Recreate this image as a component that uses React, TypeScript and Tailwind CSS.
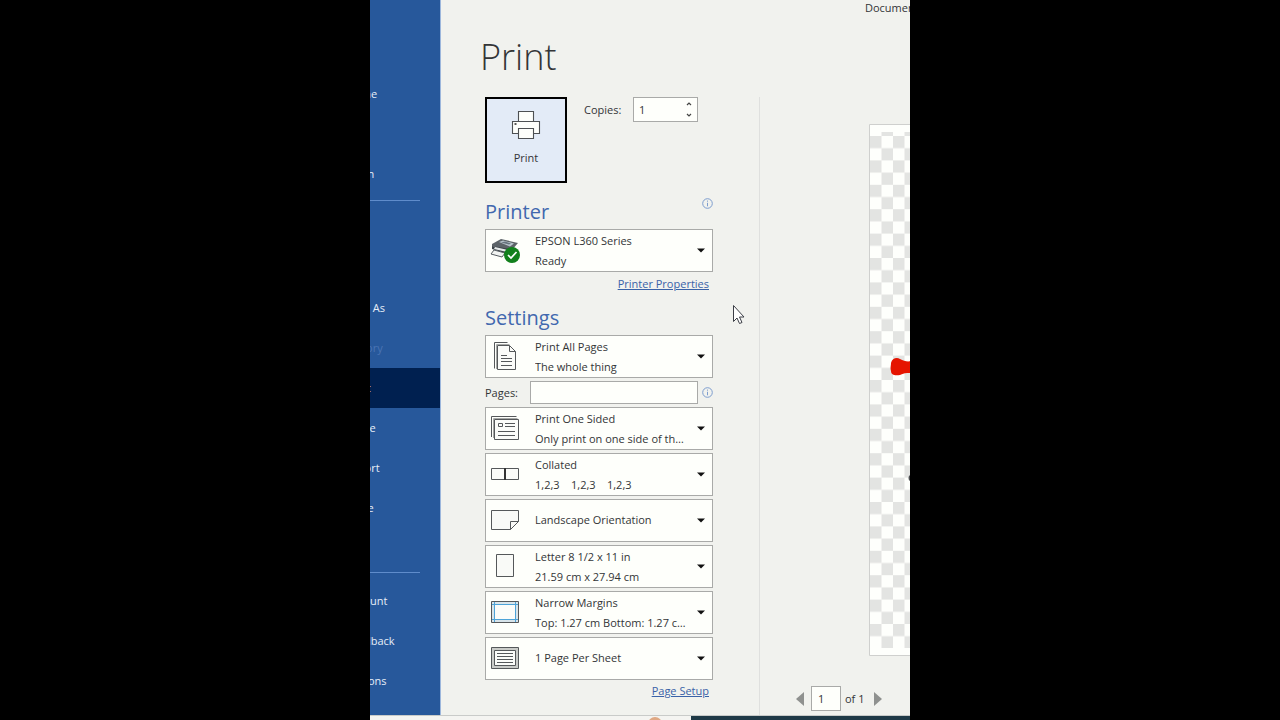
import { useState, type ReactNode } from "react";

const ink = "#55585a";

function PrinterIcon() {
  return (
    <svg width="30" height="30" viewBox="0 0 30 30" fill="#fdfefb" stroke="#4d5053" strokeWidth="1.1" aria-hidden="true">
      <path d="M7.500 1.500h15v11h-15z" />
      <path d="M1.500 11.500h27v12h-27z" />
      <path d="M7.500 18.500h15v10h-15z" />
      <path d="M3.500 14h2" stroke="#222" strokeWidth="1.500" />
    </svg>
  );
}

function EpsonIcon() {
  return (
    <svg width="30" height="26" viewBox="0 0 30 26" aria-hidden="true">
      <path d="M2 7 11 2l17 4-7 8L2 9z" fill="#5d6368" />
      <path d="m9 5 4-1.500 11 3-4 3z" fill="#b9c4cc" />
      <path d="m11 5.500 4-1 6 2-2 1z" fill="#68747e" />
      <path d="M2 9 20 12v6L2 12z" fill="#3d4348" />
      <path d="m5 10 13 3-1 2L4 12z" fill="#e5e9e9" />
      <path d="M4 13 1 17l11 3 3-4z" fill="#f1f3f1" stroke="#555b60" />
      <circle cx="22" cy="18" r="8" fill="#12801c" />
      <path d="m18 18 3 3 5.500-6" fill="none" stroke="#fff" strokeWidth="1.700" />
    </svg>
  );
}

function PagesIcon() {
  return (
    <svg width="30" height="30" viewBox="0 0 30 30" fill="none" stroke={ink} aria-hidden="true">
      <path d="M4.500 27.500v-26h13" />
      <path d="M6.500 28V3.500h13" stroke="#a6a8a6" />
      <path d="M7.500 4.500h12l6 6v18h-18z" fill="#fbfcf9" />
      <path d="M19.500 4.500v6h6M11 14.500h6M11 17.500h11M11 20.500h11M11 24.500h11" />
    </svg>
  );
}

function OneSidedIcon() {
  return (
    <svg width="30" height="26" viewBox="0 0 30 26" fill="none" stroke={ink} aria-hidden="true">
      <path d="M1.500 22V1.500h25" />
      <path d="M3.500 23V3.500h24" stroke="#a6a8a6" />
      <path d="M4.500 4.500h24v20h-24z" fill="#fbfcf9" />
      <path d="M8.500 8.500h4v3h-4zM15 8.500h10M15 11.500h10M8 16.500h17M8 20.500h17" />
    </svg>
  );
}

function CollatedIcon() {
  return (
    <svg width="30" height="14" viewBox="0 0 30 14" fill="#fbfcf9" stroke={ink} aria-hidden="true">
      <path d="M1.500 1.500h27v11h-27z" />
      <path d="M15 1v12" stroke="#333" strokeWidth="2" />
    </svg>
  );
}

function LandscapeIcon() {
  return (
    <svg width="30" height="22" viewBox="0 0 30 22" fill="#f9faf7" stroke={ink} aria-hidden="true">
      <path d="M1.500 1.500h27v11l-8 8h-19z" />
      <path d="M28.500 12.500h-8v8z" />
    </svg>
  );
}

function LetterIcon() {
  return (
    <svg width="30" height="26" viewBox="0 0 30 26" fill="#f9faf7" stroke={ink} aria-hidden="true">
      <path d="M6.500 1.500h17v22h-17z" />
    </svg>
  );
}

function MarginsIcon() {
  return (
    <svg width="30" height="24" viewBox="0 0 30 24" fill="none" aria-hidden="true">
      <path d="M1.500 1.500h27v21h-27z" fill="#d8e4ea" stroke={ink} />
      <path d="M5 5h20v14H5z" fill="#fbfcf9" />
      <path d="M4.500 2v20M25.500 2v20M2 4.500h26M2 19.500h26" stroke="#4da3d8" />
    </svg>
  );
}

function SheetIcon() {
  return (
    <svg width="30" height="24" viewBox="0 0 30 24" fill="none" stroke={ink} aria-hidden="true">
      <path d="M1.500 1.500h27v21h-27z" fill="#c9cbc8" />
      <path d="M4.500 4.500h21v15h-21z" fill="#fbfcf9" />
      <path d="M7 7.500h16M7 10.500h16M7 13.500h16M7 16.500h16" />
    </svg>
  );
}

function InfoIcon() {
  return (
    <svg width="11" height="11" viewBox="0 0 11 11" fill="none" stroke="#7d9dce" aria-hidden="true">
      <circle cx="5.500" cy="5.500" r="4.800" />
      <path d="M5.500 4.800v3.500M5.500 2.600v1.100" />
    </svg>
  );
}

type OptionProps = { label: string; value: string; detail?: string; icon: ReactNode };

function OptionBox({ label, value, detail, icon }: OptionProps) {
  return (
    <div className="grid h-[43px] border border-[#a9aaa8] bg-[#fefffb]">
      <select
        aria-label={label}
        className={`col-start-1 row-start-1 h-full w-full appearance-none bg-transparent pr-6 pl-[49px] text-[11px] outline-none ${detail ? "pb-5" : "pb-0.5"}`}
      >
        <option>{value}</option>
      </select>
      <div className="pointer-events-none col-start-1 row-start-1 flex min-w-0 items-center pr-[7px] pl-1">
        <span className="flex w-[30px] shrink-0 justify-center pb-0.5">{icon}</span>
        <span className="mr-2 ml-[15px] min-w-0 flex-1 truncate pt-5 whitespace-pre">{detail}</span>
        <svg width="8" height="5" viewBox="0 0 8 5" aria-hidden="true">
          <path d="M0 .500h8L4 4.500z" fill="#111" />
        </svg>
      </div>
    </div>
  );
}

function NavItem({ name, state = "normal" }: { name: string; state?: "normal" | "active" | "disabled" }) {
  const tone =
    state === "active" ? "bg-[#002050] text-white" : state === "disabled" ? "text-[#4a74b4]" : "text-[#e6eef8]";
  return (
    <a href="#" className={`flex h-10 items-center pl-1 ${tone}`}>
      {name}
    </a>
  );
}

function Sidebar() {
  return (
    <nav className="flex w-[71px] shrink-0 flex-col overflow-hidden border-r border-[#9db7dc] bg-[#27589b] text-[11px]">
      <div className="-ml-7 flex flex-col pt-[74px]">
        <NavItem name="Home" />
        <div className="h-10" />
        <NavItem name="Open" />
        <hr className="mt-1.5 mr-5 border-[#5f8ccb]" />
        <div className="h-[87px]" />
        <NavItem name="Save As" />
        <NavItem name="History" state="disabled" />
        <NavItem name="Print" state="active" />
        <NavItem name="Share" />
        <NavItem name="Export" />
        <NavItem name="Close" />
        <hr className="mt-11 mr-5 mb-2 border-[#5f8ccb]" />
        <NavItem name="Account" />
        <NavItem name="Feedback" />
        <NavItem name="Options" />
      </div>
    </nav>
  );
}

function PrintForm() {
  const [copies, setCopies] = useState(1);
  const [pages, setPages] = useState("");
  return (
    <form className="flex w-[228px] shrink-0 flex-col">
      <div className="flex items-start">
        <button
          type="button"
          className="flex h-[86px] w-[82px] flex-col items-center gap-2.5 border-2 border-black bg-[#e3ebf7] pt-[11px]"
        >
          <PrinterIcon />
          Print
        </button>
        <label htmlFor="copies" className="pt-[5px] pl-[17px]">
          Copies:
        </label>
        <div className="mr-[15px] ml-auto flex h-[25px] w-[65px] border border-[#a9aaa8] bg-[#fefffb]">
          <input
            id="copies"
            type="number"
            value={copies}
            onChange={(e) => setCopies(Number(e.target.value))}
            className="w-0 min-w-0 flex-1 [appearance:textfield] pl-[5px] outline-none [&::-webkit-inner-spin-button]:appearance-none"
          />
          <div className="flex w-4 flex-col">
            <button type="button" aria-label="More copies" className="flex flex-1 items-center justify-center" onClick={() => setCopies(copies + 1)}>
              <svg width="6" height="4" viewBox="0 0 6 4" fill="none" stroke="#444" strokeWidth="1.200">
                <path d="m1 3 2-2 2 2" />
              </svg>
            </button>
            <button type="button" aria-label="Fewer copies" className="flex flex-1 items-center justify-center" onClick={() => setCopies(Math.max(1, copies - 1))}>
              <svg width="6" height="4" viewBox="0 0 6 4" fill="none" stroke="#444" strokeWidth="1.200">
                <path d="m1 1 2 2 2-2" />
              </svg>
            </button>
          </div>
        </div>
      </div>

      <div className="flex h-[46px] items-start justify-between pt-[15px]">
        <h2 className="text-[20px] leading-7 text-[#4168ae]">Printer</h2>
        <button type="button" aria-label="Printer status">
          <InfoIcon />
        </button>
      </div>
      <OptionBox label="Printer" value="EPSON L360 Series" detail="Ready" icon={<EpsonIcon />} />
      <a href="#" className="mt-1 mr-1 self-end text-[#3a62a8] underline">
        Printer Properties
      </a>

      <h2 className="mt-3 mb-[3px] text-[20px] leading-7 text-[#4168ae]">Settings</h2>
      <div className="flex flex-col gap-[3px]">
        <OptionBox label="Print range" value="Print All Pages" detail="The whole thing" icon={<PagesIcon />} />
        <div className="flex h-[23px] items-center">
          <label htmlFor="pages" className="w-[45px]">
            Pages:
          </label>
          <input
            id="pages"
            type="text"
            value={pages}
            onChange={(e) => setPages(e.target.value)}
            className="h-full min-w-0 flex-1 border border-[#a9aaa8] bg-[#fefffb] px-1 outline-none"
          />
          <button type="button" aria-label="About page ranges" className="ml-1">
            <InfoIcon />
          </button>
        </div>
        <OptionBox label="Sides" value="Print One Sided" detail="Only print on one side of the page" icon={<OneSidedIcon />} />
        <OptionBox label="Collation" value="Collated" detail="1,2,3    1,2,3    1,2,3" icon={<CollatedIcon />} />
        <OptionBox label="Orientation" value="Landscape Orientation" icon={<LandscapeIcon />} />
        <OptionBox label="Paper size" value="Letter 8 1/2 x 11 in" detail="21.59 cm x 27.94 cm" icon={<LetterIcon />} />
        <OptionBox label="Margins" value="Narrow Margins" detail="Top: 1.27 cm Bottom: 1.27 cm Left: 1.27 cm" icon={<MarginsIcon />} />
        <OptionBox label="Pages per sheet" value="1 Page Per Sheet" icon={<SheetIcon />} />
      </div>
      <a href="#" className="mt-[3px] mr-1 self-end text-[#3a62a8] underline">
        Page Setup
      </a>
    </form>
  );
}

function Preview() {
  return (
    <section aria-label="Preview" className="flex min-w-0 flex-1 flex-col border-l border-[#dfe0de]">
      <svg className="mt-[27px] ml-[109px] shrink-0" width="60" height="532" viewBox="0 0 60 532" aria-hidden="true">
        <defs>
          <pattern id="checks" x="1" y="12" width="23" height="24.400" patternUnits="userSpaceOnUse">
            <path d="M0 0h11.500v12.200H0zM11.500 12.200H23v12.200H11.500z" fill="#e3e4e2" />
          </pattern>
        </defs>
        <path d="M.500.500h80v531h-80z" fill="#fefffc" stroke="#cfd0ce" />
        <path d="M1 8h60v516H1z" fill="url(#checks)" />
        <path d="M22 239c1-5 6-6 9-4 4 2 7 3 12 2v12c-5 0-8 0-12 2-5 1-9 0-9-4-1-3 0-5 0-8z" fill="#e51400" />
        <circle cx="43" cy="354" r="3.500" fill="#4b4d50" />
      </svg>
      <div className="mt-[30px] flex h-[25px] items-center pl-9">
        <button type="button" aria-label="Previous page">
          <svg width="9" height="14" viewBox="0 0 9 14">
            <path d="M8 0v14L0 7z" fill="#8f918f" />
          </svg>
        </button>
        <input
          type="text"
          aria-label="Page number"
          defaultValue="1"
          className="ml-1.5 h-full w-[30px] border border-[#a9aaa8] bg-[#fefffb] pl-1.5 outline-none"
        />
        <span className="ml-1">of 1</span>
        <button type="button" aria-label="Next page" className="ml-2.5">
          <svg width="9" height="14" viewBox="0 0 9 14">
            <path d="M0 0v14l8-7z" fill="#8f918f" />
          </svg>
        </button>
      </div>
    </section>
  );
}

export default function App() {
  return (
    <div className="flex min-h-screen justify-center bg-black font-['Open_Sans','Noto_Sans',sans-serif] text-[11px] leading-4 text-[#333537]">
      <div className="flex h-screen w-full max-w-[540px] flex-col overflow-hidden bg-[#f1f2ee]">
        <div className="flex min-h-0 flex-1 overflow-hidden">
          <Sidebar />
          <main className="flex min-w-0 flex-1 flex-col overflow-hidden">
            <header className="flex h-[97px] shrink-0 items-start justify-between">
              <h1 className="pt-8 pl-[39px] text-[36px] leading-[50px] font-light">Print</h1>
              <p className="w-[45px] overflow-hidden whitespace-nowrap">Document1</p>
            </header>
            <div className="flex min-h-0 flex-1 pl-11">
              <PrintForm />
              <div className="w-[46px] shrink-0" />
              <Preview />
            </div>
          </main>
        </div>
        <footer className="flex h-[5px] shrink-0 border-t border-[#c9cbc9]">
          <div className="flex flex-1 justify-end bg-[#f4f4f1] pr-7">
            <svg width="16" height="4" viewBox="0 0 16 4" aria-hidden="true">
              <circle cx="8" cy="8" r="7" fill="#dfa884" />
            </svg>
          </div>
          <div className="w-[219px] bg-[#1f3a47]" />
        </footer>
      </div>
      <svg
        className="pointer-events-none fixed top-[304px] left-1/2 ml-[92px]"
        width="14"
        height="21"
        viewBox="0 0 14 21"
        aria-hidden="true"
      >
        <path d="M1.500 1.500v16l3.500-3.500 2.500 5.500 2.500-1-2.500-5.500h4.500z" fill="#fff" stroke="#3c3f46" />
      </svg>
    </div>
  );
}
